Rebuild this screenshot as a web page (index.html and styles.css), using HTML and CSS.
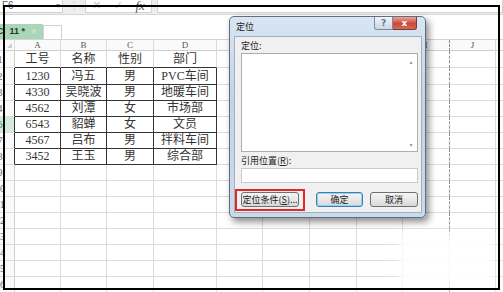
FILE: index.html
```html
<!DOCTYPE html>
<html lang="zh-CN">
<head>
    <meta charset="UTF-8">
    <title>定位</title>
    <link rel="stylesheet" href="styles.css">
</head>
<body>
    <div class="fx-bar">
        <div class="name-box">F6<span class="caret">▾</span></div>
        <div class="fx-sep">⋮</div>
        <div class="fx-btns"><span>✕</span><span>✓</span><i>fx</i></div>
        <div class="fx-input"></div>
    </div>

    <div class="tab-strip">
        <div class="doc-tab"><span class="cut">C</span><b>11 *</b><span class="tab-x">×</span></div>
        <div class="new-tab"></div>
    </div>

    <table class="sheet">
        <colgroup>
            <col class="c-rh"><col class="c-a"><col class="c-b"><col class="c-c"><col class="c-d">
            <col class="c-e"><col class="c-f"><col class="c-g"><col class="c-h"><col class="c-i"><col class="c-j"><col class="c-k">
        </colgroup>
        <tr class="cols">
            <td class="corner"><span></span></td><td>A</td><td>B</td><td>C</td><td>D</td><td>E</td><td>F</td><td>G</td><td>H</td><td>I</td><td>J</td><td></td>
        </tr>
        <tr class="top tall">
            <td class="rh"><span>1</span></td><td>工号</td><td>名称</td><td>性别</td><td>部门</td><td></td><td></td><td></td><td></td><td></td><td></td><td></td>
        </tr>
        <tr class="rec tall">
            <td class="rh"><span>2</span></td><td>1230</td><td>冯五</td><td>男</td><td>PVC车间</td><td></td><td></td><td></td><td></td><td></td><td></td><td></td>
        </tr>
        <tr class="rec">
            <td class="rh"><span>3</span></td><td>4330</td><td>吴晓波</td><td>男</td><td>地暖车间</td><td></td><td></td><td></td><td></td><td></td><td></td><td></td>
        </tr>
        <tr class="rec">
            <td class="rh"><span>4</span></td><td>4562</td><td>刘潭</td><td>女</td><td>市场部</td><td></td><td></td><td></td><td></td><td></td><td></td><td></td>
        </tr>
        <tr class="rec active">
            <td class="rh"><span>6</span></td><td>6543</td><td>貂蝉</td><td>女</td><td>文员</td><td></td><td></td><td></td><td></td><td></td><td></td><td></td>
        </tr>
        <tr class="rec">
            <td class="rh"><span>7</span></td><td>4567</td><td>吕布</td><td>男</td><td>拌料车间</td><td></td><td></td><td></td><td></td><td></td><td></td><td></td>
        </tr>
        <tr class="rec">
            <td class="rh"><span>8</span></td><td>3452</td><td>王玉</td><td>男</td><td>综合部</td><td></td><td></td><td></td><td></td><td></td><td></td><td></td>
        </tr>
        <tr><td class="rh"><span>9</span></td><td></td><td></td><td></td><td></td><td></td><td></td><td></td><td></td><td></td><td></td><td></td></tr>
        <tr><td class="rh"><span>10</span></td><td></td><td></td><td></td><td></td><td></td><td></td><td></td><td></td><td></td><td></td><td></td></tr>
        <tr><td class="rh"><span>11</span></td><td></td><td></td><td></td><td></td><td></td><td></td><td></td><td></td><td></td><td></td><td></td></tr>
        <tr><td class="rh"><span>12</span></td><td></td><td></td><td></td><td></td><td></td><td></td><td></td><td></td><td></td><td></td><td></td></tr>
        <tr><td class="rh"><span>13</span></td><td></td><td></td><td></td><td></td><td></td><td></td><td></td><td></td><td></td><td></td><td></td></tr>
        <tr><td class="rh"><span>14</span></td><td></td><td></td><td></td><td></td><td></td><td></td><td></td><td></td><td></td><td></td><td></td></tr>
        <tr><td class="rh"><span>15</span></td><td></td><td></td><td></td><td></td><td></td><td></td><td></td><td></td><td></td><td></td><td></td></tr>
        <tr><td class="rh"><span>16</span></td><td></td><td></td><td></td><td></td><td></td><td></td><td></td><td></td><td></td><td></td><td></td></tr>
    </table>

    <div class="dialog">
        <div class="dlg-title">
            <span>定位</span>
            <div class="dlg-ctrls">
                <span class="help">?</span>
                <span class="close">x</span>
            </div>
        </div>
        <div class="dlg-body">
            <div class="lbl">定位:</div>
            <div class="listbox">
                <div class="vscroll"><span>▴</span><span>▾</span></div>
            </div>
            <div class="lbl lbl-ref">引用位置(<u>R</u>):</div>
            <div class="ref-input"></div>
            <div class="dlg-btns">
                <button class="btn btn-special">定位条件(<u>S</u>)...</button>
                <button class="btn btn-ok">确定</button>
                <button class="btn btn-cancel">取消</button>
            </div>
        </div>
    </div>

    <div class="blur"></div>
    <div class="frame"></div>
</body>
</html>
```

FILE: styles.css
```css
body {
    margin: 0;
    width: 503px;
    height: 292px;
    overflow: hidden;
    position: relative;
    background: #fff;
    font-family: "Liberation Serif", "Noto Sans CJK SC", serif;
    color: #333;
}

/* formula bar */
.fx-bar {
    display: flex;
    align-items: flex-start;
    height: 15px;
    background: #eeeeee;
    border-bottom: 1px solid #d6d6d6;
    box-sizing: border-box;
}
.name-box {
    position: relative;
    width: 63px;
    height: 13px;
    background: #fff;
    border-right: 1px solid #cfcfcf;
    border-bottom: 1px solid #cfcfcf;
    box-sizing: border-box;
    font: 10px/12px "Liberation Sans", sans-serif;
    color: #555;
    padding-left: 2px;
}
.caret {
    position: absolute;
    right: 2px;
    top: 0;
    font-size: 8px;
    color: #999;
}
.fx-sep {
    width: 22px;
    text-align: center;
    font: 10px/12px "Liberation Sans", sans-serif;
    color: #bbb;
}
.fx-btns {
    display: flex;
    align-items: center;
    justify-content: space-around;
    width: 67px;
    height: 13px;
    background: #fff;
    border: 1px solid #d2d2d2;
    border-top: none;
    box-sizing: border-box;
    font: 11px/12px "DejaVu Sans", sans-serif;
    color: #c2c2c2;
}
.fx-btns i {
    font: italic 13px/12px "Liberation Serif", serif;
    color: #555;
}
.fx-input {
    flex: 1;
    height: 13px;
    margin-left: 5px;
    background: #fff;
    border: 1px solid #d2d2d2;
    border-top: none;
    box-sizing: border-box;
}

/* document tabs */
.tab-strip {
    display: flex;
    align-items: flex-end;
    height: 25px;
    border-bottom: 1px solid #d4d4d4;
    box-sizing: border-box;
}
.doc-tab {
    display: flex;
    align-items: center;
    width: 43px;
    height: 15px;
    background: #a9d6b6;
    font: 9px/15px "Liberation Sans", sans-serif;
    color: #1d3b27;
    overflow: hidden;
}
.doc-tab .cut { margin-left: -3px; margin-right: 6px; font-weight: bold; }
.doc-tab b { margin-right: 6px; }
.tab-x { color: #d6ece0; font-size: 10px; }
.new-tab {
    width: 17px;
    height: 13px;
    border: 1px solid #d0d0d0;
    border-bottom: none;
    background: #fff;
}

/* sheet grid */
.sheet {
    table-layout: fixed;
    border-collapse: separate;
    border-spacing: 0;
    width: 510px;
}
.c-rh { width: 15px; }
.c-a, .c-b, .c-e, .c-h, .c-j { width: 46px; }
.c-c, .c-f, .c-g, .c-i { width: 47px; }
.c-d { width: 63px; }
.c-k { width: 14px; }

.sheet td {
    padding: 0;
    height: 15px;
    border-right: 1px solid #dcdcdc;
    border-bottom: 1px solid #dcdcdc;
    text-align: center;
    white-space: nowrap;
    font-size: 12px;
    line-height: 15px;
    color: #333;
}
.sheet tr.tall td { height: 16px; }
.sheet td:nth-child(10) { border-right: 1px dashed #8c8c8c; }

.sheet tr.cols td {
    height: 10px;
    font-size: 9px;
    line-height: 10px;
    color: #555;
    background: #fafafa;
    border-bottom-color: #cfcfcf;
}
.corner { position: relative; }
.corner span {
    position: absolute;
    right: 2px;
    bottom: 2px;
    border-left: 5px solid transparent;
    border-bottom: 5px solid #cdcdcd;
}

.sheet td.rh {
    text-align: left;
    overflow: visible;
    font-size: 10px;
    color: #666;
    background: #fafafa;
    border-right-color: #cfcfcf;
}
.rh span {
    display: block;
    width: 20px;
    margin-left: -10px;
    text-align: center;
}
.sheet tr.active td.rh { background: #d2eadb; color: #1e7d4d; }

.sheet tr.top td:nth-child(n+2):nth-child(-n+5) { border-bottom-color: #333; }
.sheet tr.rec td:nth-child(-n+5) { border-right-color: #333; }
.sheet tr.rec td:nth-child(n+2):nth-child(-n+5) { border-bottom-color: #333; }

/* Go To dialog */
.dialog {
    position: absolute;
    left: 229px;
    top: 16px;
    width: 197px;
    height: 202px;
    box-sizing: border-box;
    border: 1px solid #5f6f83;
    border-radius: 5px;
    background: linear-gradient(#d9e5f2, #c3d4e7 40%, #cbdaeb);
    box-shadow: 3px 4px 7px rgba(0, 0, 0, 0.45);
    font-family: "Noto Sans CJK SC", sans-serif;
    color: #222;
}
.dlg-title {
    display: flex;
    justify-content: space-between;
    height: 19px;
    padding-left: 6px;
    font-size: 9px;
    line-height: 19px;
}
.dlg-ctrls { display: flex; margin-right: 8px; }
.help, .close {
    height: 13px;
    box-sizing: border-box;
    text-align: center;
    font: bold 9px/12px "DejaVu Sans", sans-serif;
}
.help {
    width: 19px;
    border: 1px solid #7d8ba0;
    border-top: none;
    border-radius: 0 0 0 3px;
    background: linear-gradient(#f1f4f8, #cdd6e2);
    color: #6b7686;
}
.close {
    width: 24px;
    border: 1px solid #7d3a33;
    border-top: none;
    border-left: none;
    border-radius: 0 0 3px 0;
    background: linear-gradient(#e9a595, #c9493b 55%, #d56a55);
    color: #fff;
}
.dlg-body {
    margin: 0 3px 0 4px;
    height: 177px;
    box-sizing: border-box;
    padding: 3px 3px 0 6px;
    background: #f0f0f0;
    border: 1px solid #9fb0c4;
    font-size: 9px;
}
.lbl { line-height: 12px; height: 12px; margin-bottom: 1px; }
.lbl-ref { margin-top: 3px; }
.listbox {
    position: relative;
    height: 99px;
    background: #fff;
    border: 1px solid #abadb3;
    box-sizing: border-box;
}
.vscroll {
    position: absolute;
    right: 0;
    top: 0;
    bottom: 0;
    width: 12px;
    display: flex;
    flex-direction: column;
    justify-content: space-between;
    align-items: center;
    padding: 4px 0 2px;
    box-sizing: border-box;
    font: 6px/8px "DejaVu Sans", sans-serif;
    color: #999;
}
.ref-input {
    height: 15px;
    background: #fff;
    border: 1px solid #c9cbd0;
    box-sizing: border-box;
}
.dlg-btns { display: flex; margin-top: 9px; }
.btn {
    height: 15px;
    padding: 0;
    box-sizing: border-box;
    border: 1px solid #707070;
    border-radius: 3px;
    background: linear-gradient(#f4f4f4, #e8e8e8 50%, #d8d8d8);
    font: 9px/13px "Noto Sans CJK SC", sans-serif;
    color: #222;
}
.btn-special {
    position: relative;
    width: 58px;
}
.btn-special::after {
    content: "";
    position: absolute;
    left: -7px;
    top: -4px;
    width: 66px;
    height: 18px;
    border: 2px solid #e0282a;
}
.btn-ok {
    width: 47px;
    margin-left: 17px;
    border-color: #3c7fb1;
    box-shadow: inset 0 0 0 1px #8fd3f4;
}
.btn-cancel { width: 48px; margin-left: 7px; }

/* washed-out corner of the screenshot */
.blur {
    position: absolute;
    left: 398px;
    top: 232px;
    width: 96px;
    height: 58px;
    background: rgba(255, 255, 255, 0.9);
    filter: blur(4px);
}

/* outline drawn round the screenshot */
.frame {
    position: absolute;
    left: 3px;
    top: 5px;
    width: 497px;
    height: 285px;
    box-sizing: border-box;
    border: 2px solid #000;
}
```
